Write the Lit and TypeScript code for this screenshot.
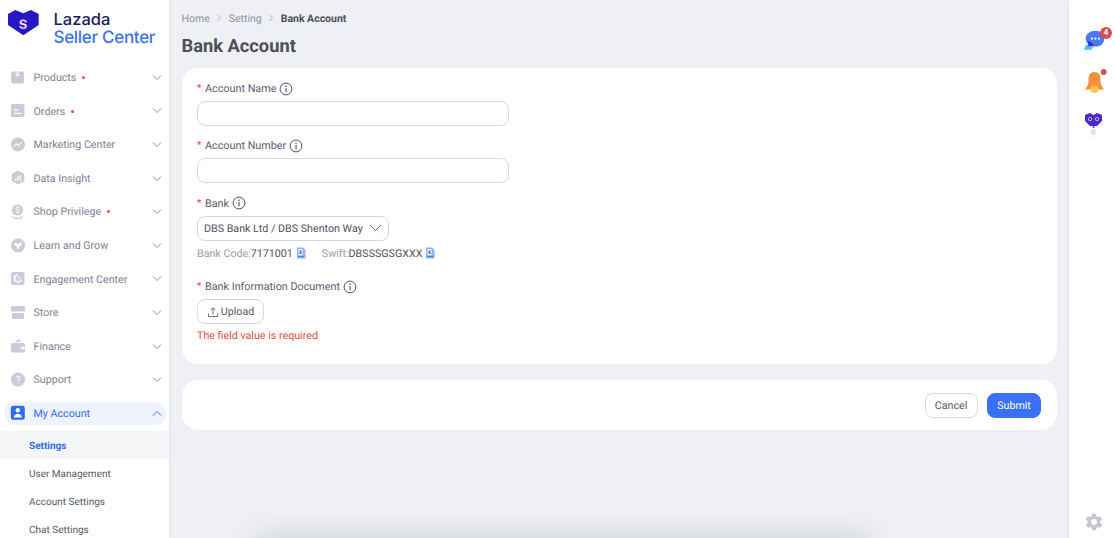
import { LitElement, html, css, svg } from "lit";
import { customElement } from "lit/decorators.js";

const G = "#c9ccd8";
const icons: Record<string, unknown> = {
  products: svg`<rect x="1" y="1.5" width="13" height="12" rx="2" fill="${G}"/><path d="M5.8 1.5v3.2c0 2 3.4 2 3.4 0V1.5" fill="#fff"/><path d="M6.7 1.5v3h1.6v-3" fill="${G}"/>`,
  orders: svg`<rect x="1" y="1" width="13.5" height="13" rx="1.6" fill="${G}"/><rect x="4" y="6.4" width="4" height="1.2" fill="#fff"/><rect x="4" y="9.8" width="7.5" height="1.2" fill="#fff"/>`,
  marketing: svg`<circle cx="8" cy="7.5" r="7" fill="${G}"/><path d="M3.8 9.6 6.4 7l1.8 1.5 3.6-3.2" fill="none" stroke="#fff" stroke-width="1.1"/>`,
  data: svg`<path d="M8 .5l6.3 3.5v7L8 14.5 1.7 11V4z" fill="${G}"/><rect x="5" y="8" width="1.3" height="3" fill="#fff"/><rect x="7.3" y="6.5" width="1.3" height="4.5" fill="#fff"/><rect x="9.6" y="5" width="1.3" height="6" fill="#fff"/>`,
  shop: svg`<circle cx="7.5" cy="6" r="5.6" fill="${G}"/><text x="7.5" y="9" text-anchor="middle" font-family="Roboto,sans-serif" font-size="8.5" fill="#fff">$</text><path d="M2.5 12.5c1 2.6 9 2.6 10 0" fill="none" stroke="${G}" stroke-width="1.2"/>`,
  learn: svg`<circle cx="8" cy="7.5" r="7" fill="${G}"/><path d="M4 5.3c1.6-.9 3.2-.4 4 1.2.8-1.6 2.4-2.1 4-1.2-.1 2.2-1.6 3.4-3.2 3.6v2.5H7.2V8.9C5.6 8.7 4.1 7.5 4 5.3z" fill="#fff"/>`,
  engage: svg`<rect x="1" y="1" width="13.5" height="13" rx="1.8" fill="${G}"/><path d="M8 4a3.5 3.5 0 1 0 3.3 4.6" fill="none" stroke="#fff" stroke-width="1.5"/><circle cx="9" cy="6.5" r="1" fill="#fff"/>`,
  store: svg`<path d="M3 1h10c1.2 0 2 .8 2 2v3.4H1V3c0-1.2.8-2 2-2z" fill="${G}"/><path d="M2 8h12v4.500c0 .8-.6 1.500-1.500 1.500h-9C2.600 14 2 13.300 2 12.500z" fill="${G}"/>`,
  finance: svg`<rect x="1" y="5" width="14" height="9.5" rx="1.8" fill="${G}"/><path d="M4 4 9 1.2 11.500 4z" fill="${G}"/><rect x="10.500" y="8.500" width="4.500" height="2.800" rx="1.400" fill="#fff"/><circle cx="12" cy="9.900" r=".7" fill="${G}"/>`,
  support: svg`<circle cx="8" cy="7.5" r="7" fill="${G}"/><text x="8" y="11" text-anchor="middle" font-family="Roboto,sans-serif" font-size="10" fill="#fff">?</text>`,
  account: svg`<rect x=".8" y=".8" width="14" height="14" rx="2.4" fill="#2f6bf5"/><circle cx="7.8" cy="5.2" r="2.2" fill="#fff"/><path d="M3.8 12.4c0-5 8-5 8 0z" fill="#fff"/>`,
};

const nav = [
  ["products", "Products", true],
  ["orders", "Orders", true],
  ["marketing", "Marketing Center", false],
  ["data", "Data Insight", false],
  ["shop", "Shop Privilege", true],
  ["learn", "Learn and Grow", false],
  ["engage", "Engagement Center", false],
  ["store", "Store", false],
  ["finance", "Finance", false],
  ["support", "Support", false],
] as const;

const info = html`<svg class="info" viewBox="0 0 14 14"><circle cx="7" cy="7" r="5.9" fill="none" stroke="#4a5063" stroke-width="1"/><rect x="6.5" y="6" width="1.1" height="4.3" fill="#4a5063"/><circle cx="7" cy="4.3" r=".8" fill="#4a5063"/></svg>`;
const copy = html`<svg class="copy" viewBox="0 0 10 12"><path d="M1 .5h6L9.500 3v8.500H1z" fill="#8fb2f7"/><rect x="2.500" y="2.200" width="4" height="6" fill="#fff"/><path d="M3.500 3.500h2v3.500h-2z" fill="#3f78f2"/><rect x="2.500" y="9" width="5.500" height="1" fill="#3f78f2"/></svg>`;

@customElement("app-root")
export class AppRoot extends LitElement {
  static styles = css`
    :host { display: flex; width: 1115px; height: 538px; overflow: hidden; background: #eef0f5; font-family: Roboto, "Liberation Sans", sans-serif; color: #4b5064; text-rendering: geometricPrecision; }
    * { box-sizing: border-box; }
    .side { width: 169px; flex: none; background: #fff; height: 538px; overflow: hidden; box-shadow: 1px 0 2px rgba(30,40,70,.06); z-index: 1; }
    .brand { height: 60.8px; display: flex; padding: 10px 0 0 7.5px; gap: 15px; }
    .brand svg { width: 31px; height: 25.5px; flex: none; }
    .brand-text { display: flex; flex-direction: column; font-family: Inter, sans-serif; font-weight: 500; }
    .l1 { font-size: 16.5px; line-height: 19px; color: #1c1a5e; }
    .l2 { font-size: 17px; line-height: 19px; color: #3b72f3; letter-spacing: -.3px; white-space: nowrap; }
    .nav { display: flex; flex-direction: column; }
    .item { height: 33.6px; display: flex; align-items: center; padding-left: 10px; font-size: 10.7px; color: #7d8296; position: relative; }
    .item svg.ic { width: 16px; height: 16px; flex: none; margin-right: 7.5px; }
    .dot { width: 3px; height: 3px; border-radius: 50%; background: #ef4a4a; margin-left: 5.5px; }
    .chev { position: absolute; left: 151.5px; top: 13px; width: 10px; height: 7px; }
    .item.on { color: #2f6bf5; margin: 5.2px 3px 6px 4px; padding-left: 6px; height: 23px; background: #eef3ff; border-radius: 11.5px; }
    .item.on .chev { left: 147.5px; top: 8px; }
    .sub { height: 28px; display: flex; align-items: center; padding: 3px 0 0 29px; font-size: 10px; color: #555a6c; }
    .sub.on { color: #2f6bf5; font-weight: 700; background: #f5f6f8; }
    main { flex: 1; min-width: 0; padding: 10px 12.5px 0; position: relative; overflow: hidden; }
    main::after { content: ""; position: absolute; left: 86px; right: 200px; top: 541px; height: 10px; box-shadow: 0 -1px 26px 0 rgba(40,45,60,.3); }
    .crumbs { display: flex; align-items: center; height: 16px; font-size: 10.5px; color: #8d92a5; gap: 5.5px; }
    .crumbs b { color: #4b4f5e; font-weight: 700; font-size: 10.5px; }
    .crumbs svg { width: 6px; height: 8px; margin: 0 1px; }
    h1 { margin: 0; font-size: 18.3px; line-height: 24px; font-weight: 700; color: #4d5056; padding-top: 9px; height: 42px; }
    .card { background: #fff; border-radius: 16px; }
    .form { height: 296px; padding: 12px 15.5px 0; display: flex; flex-direction: column; }
    .label { display: flex; align-items: center; height: 16px; padding-top: 1px; font-size: 10.8px; color: #575c70; }
    .label i { color: #e5484d; font-style: normal; width: 8px; font-size: 10px; }
    .info { width: 14px; height: 14px; margin-left: 3px; }
    .input { width: 312px; height: 25px; margin-top: 5px; border: 1px solid #d6d8e0; border-radius: 8px; margin-bottom: 11.3px; background: #fff; flex: none; }
    .select { display: flex; align-items: center; justify-content: space-between; width: 192px; height: 25px; margin-top: 5px; border: 1px solid #d6d8e0; border-radius: 8px; padding: 0 6px; font-size: 10.7px; color: #4d5160; white-space: nowrap; flex: none; }
    .select svg { width: 13px; height: 8px; }
    .meta { display: flex; align-items: center; height: 13px; margin-top: 6px; margin-bottom: 18.5px; font-size: 10.7px; color: #9a9ea8; white-space: nowrap; flex: none; }
    .meta span { color: #4d5160; }
    .copy { width: 10px; height: 12px; margin-left: 3px; }
    .gap { width: 16px; }
    .btn { display: inline-flex; align-items: center; justify-content: center; height: 25px; border-radius: 8px; font-size: 10.7px; border: 1px solid #d6d8e0; background: #fff; color: #55596a; flex: none; }
    .upload { width: 67px; margin-top: 5px; gap: 2px; }
    .upload svg { width: 12px; height: 12px; }
    .err { margin-top: 5px; font-size: 10.7px; line-height: 14px; color: #e24a4a; }
    .actions { height: 50px; margin-top: 16px; padding: 0 15.5px; display: flex; align-items: center; justify-content: flex-end; gap: 9.5px; }
    .cancel { width: 53px; }
    .submit { width: 54px; background: #3a6ff6; border-color: #3a6ff6; color: #fff; }
    .right { width: 46px; flex: none; background: #fff; height: 538px; display: flex; flex-direction: column; align-items: flex-start; padding: 29px 0 0 15px; box-shadow: -1px 0 2px rgba(30,40,70,.05); }
    .right svg { display: block; flex: none; }
    .chat { position: relative; width: 21px; height: 21px; }
    .badge { position: absolute; left: 16px; top: -2px; width: 12px; height: 12px; border-radius: 50%; background: #dc4a4a; color: #fff; font-size: 8.5px; font-weight: 700; line-height: 12px; text-align: center; }
    .bell { margin-top: 19px; }
    .bot { margin-top: 19px; }
    .spacer { flex: 1; }
    .gear { margin-bottom: 6px; }
  `;

  render() {
    return html`
      <aside class="side">
        <div class="brand">
          <svg viewBox="0 0 31 25.5"><defs><linearGradient id="sg" x1="0" y1="0" x2="0" y2="1"><stop offset="0" stop-color="#f78fea"/><stop offset=".5" stop-color="#ffffff"/><stop offset="1" stop-color="#e83fe0"/></linearGradient></defs><path d="M7.300 0 0 4v11l15.300 10.300L30.700 15V4L23 0l-7.700 3.300z" fill="#2318c4"/><text x="15" y="18.500" text-anchor="middle" font-family="Inter,sans-serif" font-weight="700" font-size="13" fill="url(#sg)">S</text></svg>
          <div class="brand-text"><span class="l1">Lazada</span><span class="l2">Seller Center</span></div>
        </div>
        <div class="nav">
          ${nav.map(([ic, t, d]) => html`<div class="item">
            <svg class="ic" viewBox="0 0 16 16">${icons[ic]}</svg>${t}${d ? html`<span class="dot"></span>` : ""}
            <svg class="chev" viewBox="0 0 10 7"><path d="M1 1.5 5 5.5 9 1.5" fill="none" stroke="#8a8fa0" stroke-width="1"/></svg>
          </div>`)}
          <div class="item on">
            <svg class="ic" viewBox="0 0 16 16">${icons.account}</svg>My Account
            <svg class="chev" viewBox="0 0 10 7"><path d="M1 5.5 5 1.5 9 5.5" fill="none" stroke="#2f6bf5" stroke-width="1"/></svg>
          </div>
          <div class="sub on">Settings</div>
          <div class="sub">User Management</div>
          <div class="sub">Account Settings</div>
          <div class="sub">Chat Settings</div>
        </div>
      </aside>
      <main>
        <div class="crumbs">Home
          <svg viewBox="0 0 6 8"><path d="M1.5 1 4.5 4 1.5 7" fill="none" stroke="#a3a7b5" stroke-width=".8"/></svg>Setting
          <svg viewBox="0 0 6 8"><path d="M1.5 1 4.5 4 1.5 7" fill="none" stroke="#a3a7b5" stroke-width=".8"/></svg><b>Bank Account</b>
        </div>
        <h1>Bank Account</h1>
        <section class="card form">
          <div class="label"><i>*</i>Account Name ${info}</div>
          <div class="input"></div>
          <div class="label"><i>*</i>Account Number ${info}</div>
          <div class="input"></div>
          <div class="label"><i>*</i>Bank ${info}</div>
          <div class="select">DBS Bank Ltd / DBS Shenton Way
            <svg viewBox="0 0 13 8"><path d="M1 1 6.5 6.5 12 1" fill="none" stroke="#6b7080" stroke-width="1"/></svg></div>
          <div class="meta">Bank Code:<span>7171001</span>${copy}<div class="gap"></div>Swift:<span>DBSSSGSGXXX</span>${copy}</div>
          <div class="label"><i>*</i>Bank Information Document ${info}</div>
          <div class="btn upload"><svg viewBox="0 0 12 12"><path d="M1.5 7.5v3h9v-3M6 8.5V2M3.8 4 6 1.8 8.200 4" fill="none" stroke="#5b6072" stroke-width=".9"/></svg>Upload</div>
          <div class="err">The field value is required</div>
        </section>
        <section class="card actions">
          <div class="btn cancel">Cancel</div>
          <div class="btn submit">Submit</div>
        </section>
      </main>
      <aside class="right">
        <div class="chat">
          <svg width="21" height="21" viewBox="0 0 24 24"><path d="M2 18 0 24h8l3-3z" fill="#5ec4fa"/><path d="M13 2c6 0 10 3.500 10 9s-4 9-10 9c-1.500 0-3-.2-4.500-.7L4 21l.4-4.500C3 15 2 13 2 11 2 5.500 7 2 13 2z" fill="#4a78f5"/><path d="M4 14c3 0 6 2 7 5l-3 1-3-2z" fill="#2438c8"/><circle cx="9" cy="11" r="1.200" fill="#fff"/><circle cx="13" cy="11" r="1.200" fill="#fff"/><circle cx="17" cy="11" r="1.200" fill="#fff"/></svg>
          <span class="badge">4</span>
        </div>
        <svg class="bell" width="24" height="24" viewBox="0 0 24 24"><path d="M10.500 3c4 0 6 3 6 7v3c0 3 2 5 3.500 7.500H1C2.500 18 4.500 16 4.500 13v-3c0-4 2-7 6-7z" fill="#f5913a"/><path d="M6.500 20.500a4 4 0 0 1 8 0 4 3.500 0 0 1-8 0z" fill="#f7c94b"/><circle cx="19.700" cy="3" r="3" fill="#d9534f"/></svg>
        <svg class="bot" width="20" height="26" viewBox="0 0 20 26"><circle cx="9.500" cy="20" r="3" fill="#e4e5ea"/><circle cx="9.500" cy="24" r="1.500" fill="#eeeff3"/><path d="M1 3l5-2 3.500 2L13 1l5 2v6l-5 5H6L1 9z" fill="#4a2cc9"/><circle cx="6" cy="7" r="1.700" fill="none" stroke="#d7c8ff" stroke-width=".8"/><circle cx="13" cy="7" r="1.700" fill="none" stroke="#d7c8ff" stroke-width=".8"/><circle cx="9.500" cy="15" r="1" fill="#4a2cc9"/></svg>
        <div class="spacer"></div>
        <svg class="gear" width="20" height="20" viewBox="0 0 24 24"><path fill="#c4c7d3" d="M19.400 13c.1-.3.1-.7.1-1s0-.7-.1-1l2.100-1.600c.2-.2.2-.4.1-.6l-2-3.500c-.1-.2-.4-.3-.6-.2l-2.500 1c-.5-.4-1.100-.7-1.700-1l-.4-2.600c0-.3-.2-.5-.5-.5h-4c-.3 0-.5.2-.5.5l-.4 2.600c-.6.3-1.200.6-1.700 1l-2.500-1c-.2-.1-.5 0-.6.2l-2 3.500c-.1.2-.1.400.1.600L4.600 11c-.1.3-.1.700-.1 1s0 .7.1 1l-2.100 1.600c-.2.2-.2.400-.1.600l2 3.500c.1.2.4.3.6.2l2.500-1c.5.4 1.100.7 1.700 1l.4 2.600c0 .3.2.5.5.5h4c.3 0 .5-.2.5-.5l.4-2.600c.6-.3 1.200-.6 1.700-1l2.500 1c.2.1.5 0 .6-.2l2-3.500c.1-.2.1-.4-.1-.6zM12 15.500a3.500 3.500 0 1 1 0-7 3.500 3.500 0 0 1 0 7z"/></svg>
      </aside>
    `;
  }
}
